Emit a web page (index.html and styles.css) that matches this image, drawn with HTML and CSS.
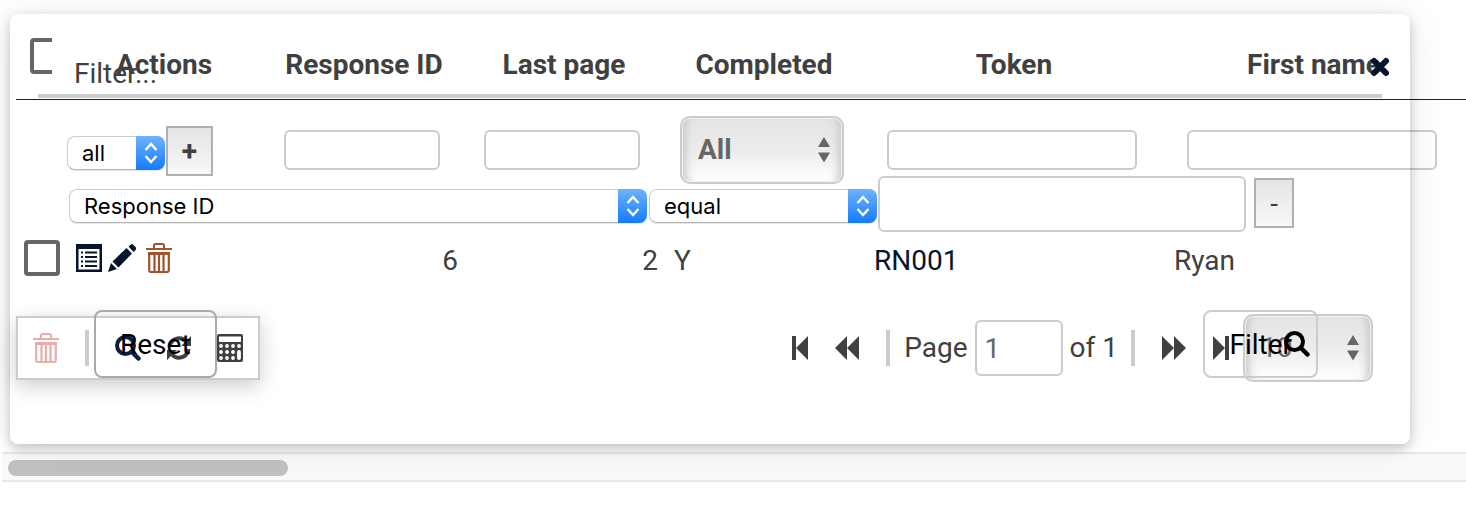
FILE: index.html
```html
<!DOCTYPE html>
<html lang="en">
<head>
    <meta charset="UTF-8">
    <meta name="viewport" content="width=device-width, initial-scale=1.0">
    <title>Responses</title>
    <link rel="stylesheet" href="styles.css">
</head>
<body>
    <!-- shared icons -->
    <svg class="sprite" aria-hidden="true">
        <symbol id="icon-trash" viewBox="0 0 26 30">
            <path d="M8 5V2.500Q8 1 9.500 1h7Q18 1 18 2.500V5" fill="none" stroke="currentColor" stroke-width="2"/>
            <path d="M0 5h26v2H0zM2 9h22v3H2z" fill="currentColor"/>
            <path d="M3.200 11v16Q3.200 29 5 29h16Q22.800 29 22.800 27V11M8.500 11v17M13 11v17M17.500 11v17" fill="none" stroke="currentColor" stroke-width="2.200"/>
        </symbol>
        <symbol id="icon-search" viewBox="0 0 26 26">
            <circle cx="10.500" cy="10.500" r="8.500" fill="none" stroke="currentColor" stroke-width="4"/>
            <path d="M17 17l6.500 6.500" stroke="currentColor" stroke-width="4.500" stroke-linecap="round"/>
        </symbol>
        <symbol id="icon-updown" viewBox="0 0 12 26">
            <path d="M0 10L6 0l6 10zM0 15.500h12L6 25.500z" fill="currentColor"/>
        </symbol>
        <symbol id="icon-chevrons" viewBox="0 0 14 22">
            <path d="M1.500 8L7 2l5.500 6M1.500 14L7 20l5.500-6" fill="none" stroke="currentColor" stroke-width="2.500"/>
        </symbol>
    </svg>

    <div class="grid-panel">
        <div class="grid">
            <table class="grid-table">
                <colgroup>
                    <col class="col-check">
                    <col class="col-short">
                    <col class="col-short">
                    <col class="col-short">
                    <col class="col-short">
                    <col class="col-long">
                    <col class="col-long">
                </colgroup>
                <thead>
                    <tr>
                        <th class="check-cell"><span class="check-clip"><input type="checkbox" class="check" aria-label="Select all"></span></th>
                        <th>Actions</th>
                        <th>Response ID</th>
                        <th>Last page</th>
                        <th>Completed</th>
                        <th>Token</th>
                        <th>First name</th>
                    </tr>
                </thead>
                <tbody>
                    <tr class="filter-row">
                        <td></td>
                        <td></td>
                        <td><input type="text" class="column-filter" aria-label="Response ID"></td>
                        <td><input type="text" class="column-filter" aria-label="Last page"></td>
                        <td class="select-cell">
                            <span class="grid-select grid-select-bold">
                                <select aria-label="Completed"><option>All</option><option>Yes</option><option>No</option></select>
                                <svg class="updown"><use href="#icon-updown"/></svg>
                            </span>
                        </td>
                        <td><input type="text" class="column-filter column-filter-long" aria-label="Token"></td>
                        <td><input type="text" class="column-filter column-filter-long" aria-label="First name"></td>
                    </tr>
                    <tr class="data-row">
                        <td><input type="checkbox" class="check" aria-label="Select response 6"></td>
                        <td>
                            <div class="actions">
                                <a href="#" aria-label="View"><svg width="26" height="28" viewBox="0 0 26 28">
                                    <path d="M0 0h26v28H0zM2.500 5v20.500h21V5z" fill="currentColor" fill-rule="evenodd"/>
                                    <path d="M5 8.500h2M5 13h2M5 17.500h2M5 22h2M9 8.500h12M9 13h12M9 17.500h12M9 22h12" stroke="currentColor" stroke-width="2"/>
                                </svg></a>
                                <a href="#" aria-label="Edit"><svg width="28" height="28" viewBox="0 0 28 28">
                                    <path d="M0 28l3-9 6 6zM4.500 17.500L18.500 4l5.500 5.500L10.500 23.500zM20.500 2.500L23 .5q1-.8 2 0L28 3.500q.6 1 0 2L25.500 8z" fill="currentColor"/>
                                </svg></a>
                                <a href="#" class="delete" aria-label="Delete"><svg width="26" height="30"><use href="#icon-trash"/></svg></a>
                            </div>
                        </td>
                        <td class="number">6</td>
                        <td class="number">2</td>
                        <td>Y</td>
                        <td><a href="#">RN001</a></td>
                        <td>Ryan</td>
                    </tr>
                </tbody>
            </table>

            <div class="grid-footer">
                <div class="toolbar">
                    <button class="icon-button trash-off" aria-label="Delete selected"><svg width="26" height="30"><use href="#icon-trash"/></svg></button>
                    <span class="separator"></span>
                    <button class="icon-button search" aria-label="Search"><svg width="26" height="26"><use href="#icon-search"/></svg></button>
                    <button class="icon-button" aria-label="Refresh"><svg width="24" height="24" viewBox="0 0 24 24">
                        <path d="M2.500 11A9.500 9.500 0 0 1 19 5.500M21.500 13A9.500 9.500 0 0 1 5 18.500" fill="none" stroke="currentColor" stroke-width="4"/>
                        <path d="M24 0v10H14zM0 24V14h10z" fill="currentColor"/>
                    </svg></button>
                    <button class="icon-button" aria-label="Columns"><svg width="26" height="28" viewBox="0 0 26 28">
                        <path d="M2 0h22q2 0 2 2v24q0 2-2 2H2q-2 0-2-2V2q0-2 2-2z" fill="currentColor"/>
                        <path d="M2 2.500h22V8H2z" fill="#fff"/>
                        <path d="M4 12h.01M10 12h.01M16 12h.01M22 12h.01M4 18h.01M10 18h.01M16 18h.01M4 24h.01M10 24h.01M16 24h.01M22 18v6" stroke="#fff" stroke-width="3.800" stroke-linecap="round"/>
                    </svg></button>
                </div>
                <div class="pager">
                    <button class="icon-button" aria-label="First page"><svg width="16" height="24" viewBox="0 0 16 24"><path d="M0 0h4v24H0zM16 0v24L4 12z" fill="currentColor"/></svg></button>
                    <button class="icon-button" aria-label="Previous page"><svg width="24" height="24" viewBox="0 0 24 24"><path d="M12 0v24L0 12zM24 0v24L12 12z" fill="currentColor"/></svg></button>
                    <span class="separator"></span>
                    <div class="page-number">
                        <label for="page">Page</label>
                        <input type="text" id="page" value="1">
                        <span>of 1</span>
                    </div>
                    <span class="separator"></span>
                    <button class="icon-button" aria-label="Next page"><svg width="24" height="24" viewBox="0 0 24 24"><path d="M0 0v24l12-12zM12 0v24l12-12z" fill="currentColor"/></svg></button>
                    <button class="icon-button" aria-label="Last page"><svg width="16" height="24" viewBox="0 0 16 24"><path d="M0 0v24l12-12zM12 0h4v24h-4z" fill="currentColor"/></svg></button>
                    <span class="grid-select page-size">
                        <select aria-label="Rows per page"><option>10</option><option>25</option><option>50</option></select>
                        <svg class="updown"><use href="#icon-updown"/></svg>
                    </span>
                </div>
            </div>
        </div>

        <div class="scroll-track"><div class="scroll-thumb"></div></div>

        <!-- filter dialog, lies over the grid -->
        <div class="dialog" role="dialog" aria-labelledby="dialog-title">
            <div class="dialog-header">
                <span id="dialog-title">Filter...</span>
                <button class="icon-button close" aria-label="Close"><svg width="20" height="20" viewBox="0 0 20 20"><path d="M4 4l12 12M16 4L4 16" stroke="currentColor" stroke-width="6" stroke-linecap="round"/></svg></button>
            </div>
            <div class="group-row">
                <span class="mac-select group-op">
                    <select aria-label="Match"><option>all</option><option>any</option></select>
                    <span class="mac-arrow"><svg width="14" height="22"><use href="#icon-chevrons"/></svg></span>
                </span>
                <button class="rule-button add">+</button>
            </div>
            <div class="rule-row">
                <span class="mac-select rule-field">
                    <select aria-label="Field"><option>Response ID</option><option>Last page</option><option>Token</option></select>
                    <span class="mac-arrow"><svg width="14" height="22"><use href="#icon-chevrons"/></svg></span>
                </span>
                <span class="mac-select rule-op">
                    <select aria-label="Operator"><option>equal</option><option>not equal</option></select>
                    <span class="mac-arrow"><svg width="14" height="22"><use href="#icon-chevrons"/></svg></span>
                </span>
                <input type="text" class="rule-value" aria-label="Value">
                <button class="rule-button remove">-</button>
            </div>
            <div class="dialog-footer">
                <button class="dialog-button reset">Reset</button>
                <button class="dialog-button apply">Filter<svg width="26" height="26"><use href="#icon-search"/></svg></button>
            </div>
        </div>
    </div>
</body>
</html>
```
FILE: styles.css
```css
* {
    box-sizing: border-box;
}
body {
    margin: 0;
    background: #fff;
    color: #404040;
    font-family: Roboto, sans-serif;
    font-size: 28px;
    line-height: 32px;
}
a {
    color: #06152d;
    text-decoration: none;
}
input, select, button {
    margin: 0;
    font-family: inherit;
    font-size: 28px;
    color: inherit;
}
svg {
    display: block;
}
.sprite {
    position: absolute;
    width: 0;
    height: 0;
}

/* Grid */
.grid-panel {
    position: relative;
    overflow: hidden;
    padding-bottom: 26px;
}
.grid {
    padding: 30px 0 0 16px;
}
.grid-table {
    width: 100%;
    min-width: 1450px;
    table-layout: fixed;
    border-collapse: separate;
    border-spacing: 0;
}
.col-check {
    width: 50px;
}
.col-short {
    width: 200px;
}
.grid-table th {
    height: 70px;
    padding: 0 12px 0 8px;
    border-bottom: 1px solid #222;
    font-weight: bold;
    text-align: center;
}
.grid-table .check-cell {
    padding: 8px 0 0 14px;
    vertical-align: top;
}
.check-clip {
    display: block;
    width: 22px;
    overflow: hidden;
}
.check {
    display: block;
    appearance: none;
    width: 36px;
    height: 36px;
    border: 4px solid #666;
    border-radius: 4px;
    background: #fff;
}
.filter-row td {
    height: 136px;
    padding: 30px 0 0 18px;
    vertical-align: top;
}
.filter-row .select-cell {
    padding: 16px 0 0 14px;
}
.column-filter {
    display: block;
    width: 156px;
    height: 40px;
    padding: 0 8px;
    border: 2px solid #ccc;
    border-radius: 6px;
    background: #fff;
}
.column-filter-long {
    width: 250px;
    margin-left: 3px;
}
.data-row td {
    height: 48px;
    padding: 2px 8px 0;
}
.data-row .check {
    margin-bottom: 6px;
}
.data-row .number {
    text-align: right;
}
.actions {
    display: flex;
    align-items: center;
    gap: 6px;
    height: 32px;
    padding: 0 2px 6px;
}
.actions .delete {
    margin-left: 4px;
    color: #a0522d;
}

.grid-select {
    display: block;
    position: relative;
    width: 164px;
    color: #666;
}
.grid-select select {
    display: block;
    appearance: none;
    width: 100%;
    height: 68px;
    padding: 0 16px 2px;
    border: 2px solid #ccc;
    border-radius: 10px;
    background: linear-gradient(#e4e4e4, #ececec 50%, #fff);
    box-shadow: inset 0 0 0 1px #f0f0f0, inset 12px 0 8px -8px #c8c8c8, inset -12px 0 8px -8px #c8c8c8;
}
.grid-select-bold select {
    font-weight: bold;
}
.updown {
    position: absolute;
    top: 21px;
    right: 14px;
    width: 12px;
    height: 26px;
    pointer-events: none;
}

/* Toolbar and pager */
.grid-footer {
    display: flex;
    align-items: center;
    justify-content: space-between;
    margin-top: 30px;
    padding-right: 93px;
}
.icon-button {
    display: block;
    padding: 0;
    border: 0;
    background: none;
    cursor: pointer;
}
.separator {
    width: 4px;
    height: 36px;
    background: #ccc;
}
.toolbar {
    display: flex;
    align-items: center;
    gap: 26px;
    height: 64px;
    padding: 0 15px;
    border: 2px solid #ccc;
    background: #fff;
    box-shadow: 0 6px 20px rgba(0, 0, 0, 0.2);
}
.trash-off {
    color: #e8adad;
}
.search {
    color: #0a2045;
}
.pager {
    display: flex;
    align-items: center;
    gap: 27px;
}
.page-number {
    display: flex;
    align-items: center;
    gap: 7px;
    margin: 0 -14px 0 -13px;
}
.page-number input {
    width: 88px;
    height: 56px;
    padding: 0 8px;
    border: 2px solid #ccc;
    border-radius: 6px;
    background: #fff;
    color: #666;
}
.page-size {
    width: 130px;
    margin-left: -13px;
}

.scroll-track {
    height: 30px;
    margin: 70px 0 0 2px;
    padding: 6px;
    border: solid #e8e8e8;
    border-width: 2px 0;
    background: #fafafa;
}
.scroll-thumb {
    width: 280px;
    height: 16px;
    border-radius: 8px;
    background: #c1c1c1;
}

/* Filter dialog */
.dialog {
    position: absolute;
    top: 14px;
    left: 10px;
    right: 56px;
    padding-bottom: 66px;
    border-radius: 8px;
    box-shadow: 0 4px 12px rgba(0, 0, 0, 0.22), 0 2px 40px rgba(0, 0, 0, 0.08);
}
.dialog-header {
    display: flex;
    align-items: center;
    height: 84px;
    margin: 0 28px;
    padding: 40px 0 0 36px;
    border-bottom: 4px solid #ccc;
}
.close {
    position: absolute;
    top: 43px;
    right: 20px;
    color: #06152d;
}
.group-row {
    display: flex;
    align-items: center;
    gap: 1px;
    margin-top: 28px;
    padding-left: 57px;
}
.rule-row {
    display: flex;
    align-items: center;
    padding: 0 116px 0 59px;
}
.mac-select {
    display: block;
    position: relative;
    height: 34px;
    margin-top: 3px;
    color: #000;
}
.mac-select select {
    display: block;
    appearance: none;
    width: 100%;
    height: 34px;
    padding: 0 14px;
    border: 1px solid #ccc;
    border-bottom-color: #b4b4b4;
    border-radius: 8px;
    background: #fff;
    box-shadow: 0 1px 1px rgba(0, 0, 0, 0.1);
    font-family: Inter, sans-serif;
    font-size: 22px;
}
.mac-arrow {
    display: flex;
    align-items: center;
    justify-content: center;
    position: absolute;
    top: 0;
    right: 0;
    width: 29px;
    height: 34px;
    border-radius: 0 8px 8px 0;
    background: linear-gradient(#6db3fa, #147bff);
    color: #fff;
    pointer-events: none;
}
.group-op {
    width: 98px;
}
.rule-field {
    flex: 1;
    margin-right: 2px;
}
.rule-op {
    width: 228px;
    margin-right: 1px;
}
.rule-value {
    width: 368px;
    height: 56px;
    margin-right: 8px;
    padding: 0 8px;
    border: 2px solid #ccc;
    border-radius: 6px;
    background: #fff;
}
.rule-button {
    width: 40px;
    height: 50px;
    padding: 0;
    border: 2px solid #b0b0b0;
    background: linear-gradient(#e4e4e4, #f8f8f8);
    font-size: 28px;
    font-weight: bold;
    cursor: pointer;
}
.add {
    width: 47px;
}
.remove {
    margin-bottom: 2px;
    font-weight: normal;
}
.dialog-footer {
    display: flex;
    justify-content: space-between;
    margin-top: 78px;
    padding: 0 92px 0 84px;
}
.dialog-button {
    display: flex;
    align-items: center;
    height: 68px;
    padding: 0 24px;
    border: 2px solid #aaa;
    border-radius: 8px;
    background: none;
    color: #000;
    cursor: pointer;
}
.apply {
    padding: 0 6px 0 24px;
    border-color: #ccc;
}
.apply svg {
    margin-left: -8px;
}
```
